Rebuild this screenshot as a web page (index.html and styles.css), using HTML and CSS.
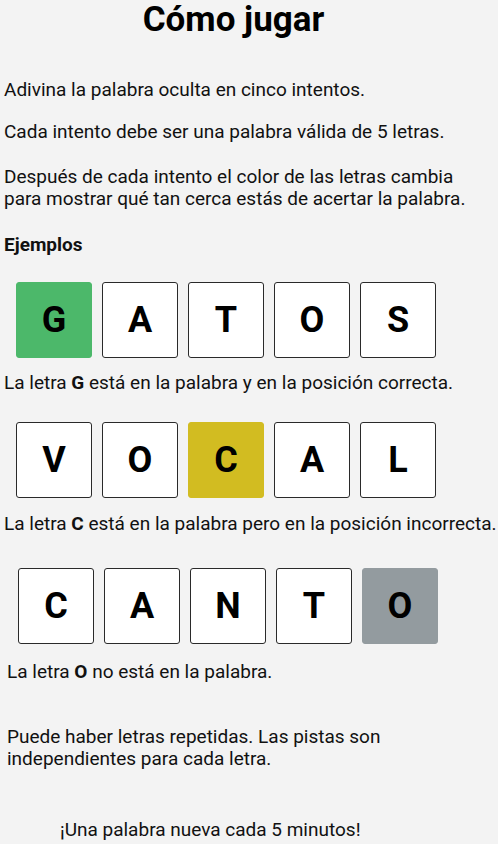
FILE: index.html
```html
<!DOCTYPE html>
<html lang="es">
<head>
<meta charset="utf-8">
<title>Cómo jugar</title>
<link rel="stylesheet" href="styles.css">
</head>
<body>
<main class="help">
  <h1 class="title">Cómo jugar</h1>
  <p class="p-intro">Adivina la palabra oculta en cinco intentos.</p>
  <p class="p-rule">Cada intento debe ser una palabra válida de 5 letras.</p>
  <p class="p-color">Después de cada intento el color de las letras cambia para mostrar qué tan cerca estás de acertar la palabra.</p>
  <h2 class="examples">Ejemplos</h2>

  <div class="row row-1">
    <div class="tile correct">G</div>
    <div class="tile">A</div>
    <div class="tile">T</div>
    <div class="tile">O</div>
    <div class="tile">S</div>
  </div>
  <p class="note note-1">La letra <b>G</b> está en la palabra y en la posición correcta.</p>

  <div class="row row-2">
    <div class="tile">V</div>
    <div class="tile">O</div>
    <div class="tile present">C</div>
    <div class="tile">A</div>
    <div class="tile">L</div>
  </div>
  <p class="note note-2">La letra <b>C</b> está en la palabra pero en la posición incorrecta.</p>

  <div class="row row-3 shifted">
    <div class="tile">C</div>
    <div class="tile">A</div>
    <div class="tile">N</div>
    <div class="tile">T</div>
    <div class="tile absent">O</div>
  </div>
  <p class="note note-3 shifted">La letra <b>O</b> no está en la palabra.</p>

  <p class="p-repeat shifted">Puede haber letras repetidas. Las pistas son independientes para cada letra.</p>
  <p class="p-footer">¡Una palabra nueva cada 5 minutos!</p>
</main>
</body>
</html>
```

FILE: styles.css
```css
html, body {
  margin: 0;
  padding: 0;
  background: #f3f3f3;
}
body {
  font-family: Roboto, "Noto Sans", "Liberation Sans", sans-serif;
  font-size: 19px;
  line-height: 22px;
  color: #111;
}
.help {
  padding: 0 0 0 4px;
  display: flex;
  flex-direction: column;
  align-items: stretch;
}
.title {
  margin: 0;
  padding: 1px 35px 0 0;
  font-size: 35px;
  line-height: 37px;
  font-weight: 700;
  text-align: center;
  color: #000;
}
p { margin: 0; }
.p-intro { margin-top: 41px; }
.p-rule { margin-top: 20px; }
.p-color { margin-top: 23px; padding-right: 4px; }
.examples {
  margin: 24px 0 0;
  font-size: 19px;
  line-height: 22px;
  font-weight: 700;
}
.row {
  display: flex;
  gap: 10px;
  padding-left: 12px;
}
.row-1 { margin-top: 26px; }
.row-2 { margin-top: 28px; }
.row-3 { margin-top: 33px; }
.shifted { padding-left: 3px; }
.row.shifted { padding-left: 14px; }
.tile {
  box-sizing: border-box;
  width: 76px;
  height: 76px;
  border: 1px solid #2a2a2a;
  border-radius: 3px;
  background: #fff;
  display: flex;
  align-items: center;
  justify-content: center;
  font-size: 36px;
  font-weight: 700;
  color: #000;
}
.tile.correct { background: #4cb86a; border-color: #4cb86a; }
.tile.present { background: #d2bc21; border-color: #d2bc21; }
.tile.absent { background: #939b9f; border-color: #939b9f; }
.note { white-space: nowrap; }
.note-1 { margin-top: 14px; }
.note-2 { margin-top: 15px; }
.note-3 { margin-top: 17px; }
.p-repeat { margin-top: 43px; padding-right: 4px; }
.p-footer { margin-top: 49px; padding-left: 56px; }
b { font-weight: 700; }
```
